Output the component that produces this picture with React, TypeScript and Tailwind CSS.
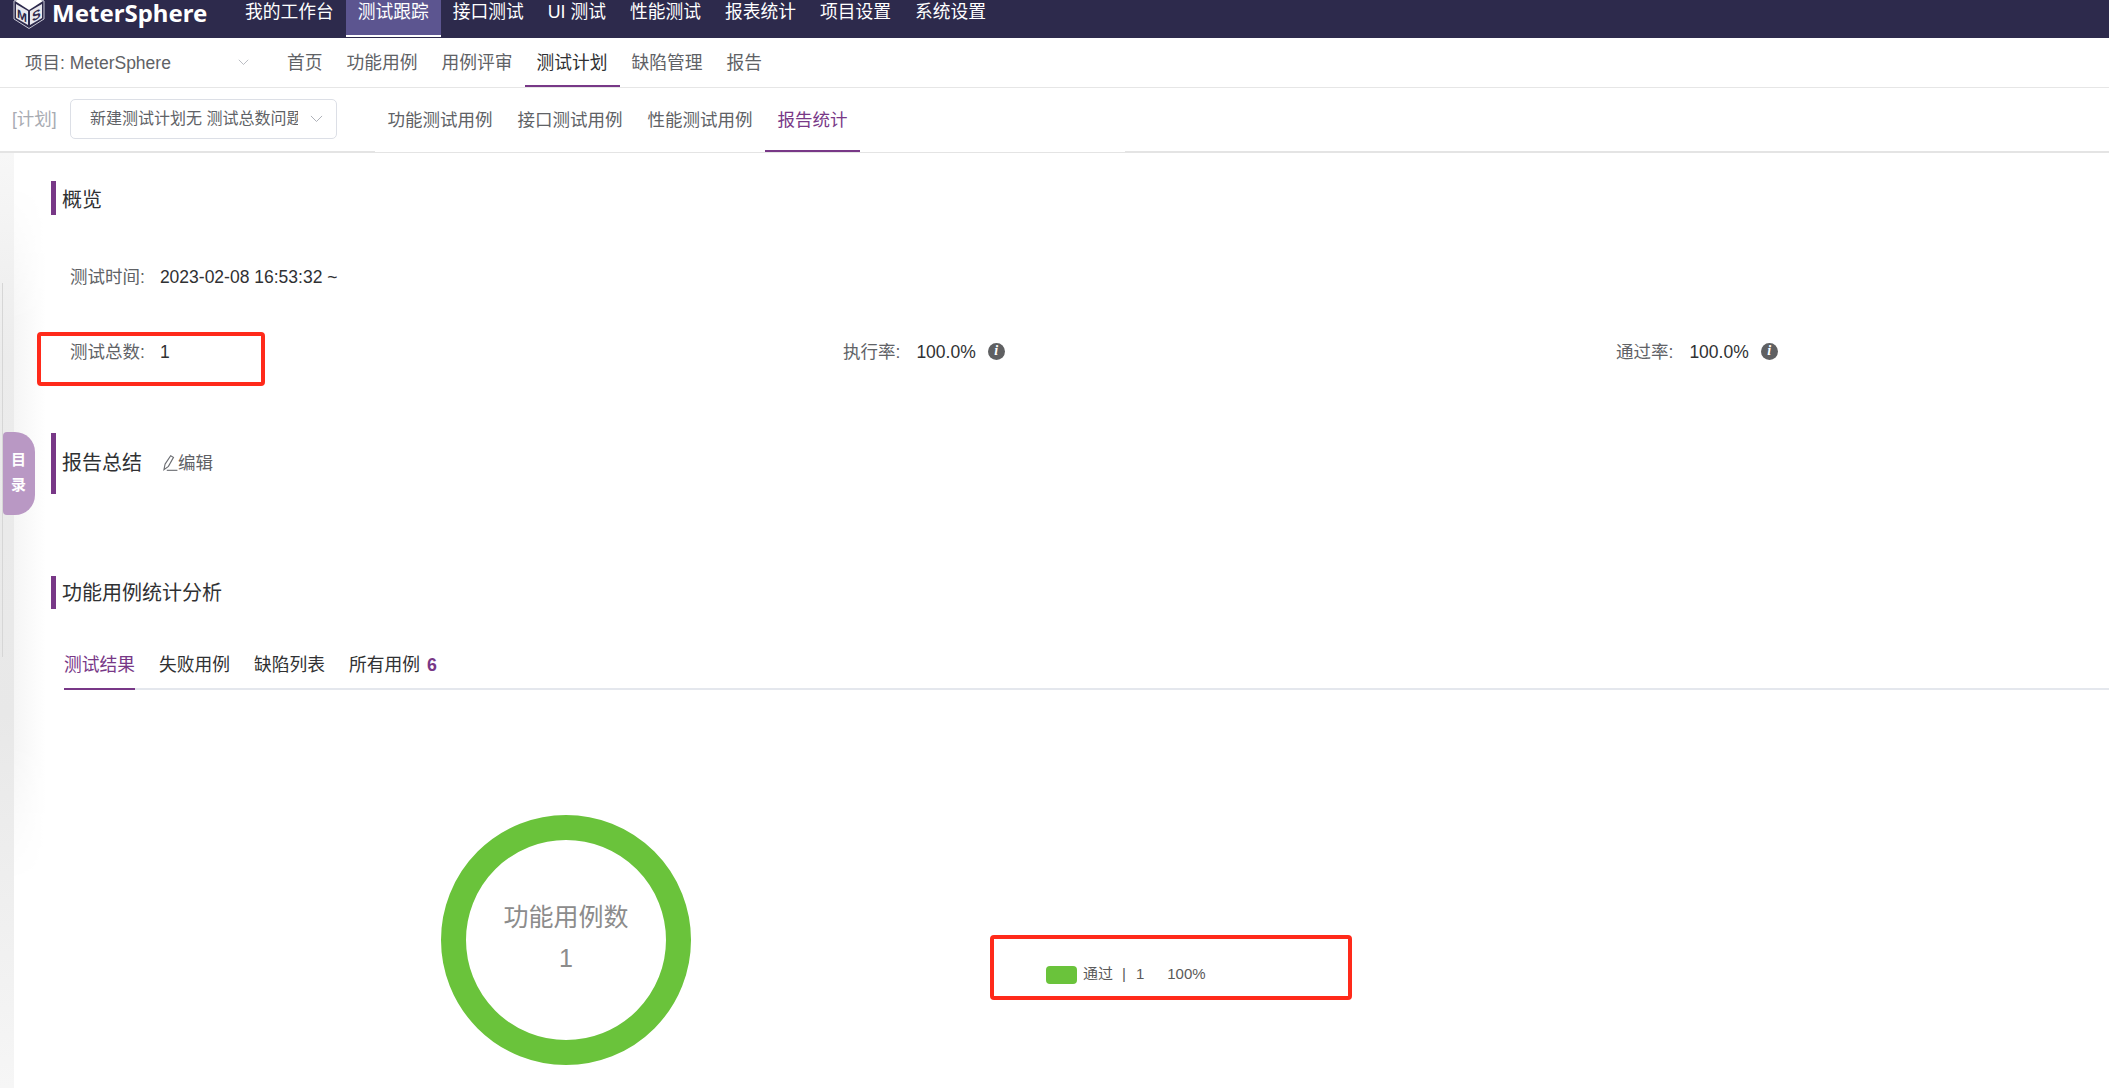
const FONT = 'font-["Liberation_Sans","Noto_Sans_CJK_SC",sans-serif]'

const mainNav = ['我的工作台', '测试跟踪', '接口测试', 'UI 测试', '性能测试', '报表统计', '项目设置', '系统设置']
const subNav = ['首页', '功能用例', '用例评审', '测试计划', '缺陷管理', '报告']
const planTabs = ['功能测试用例', '接口测试用例', '性能测试用例', '报告统计']
const resultTabs = ['测试结果', '失败用例', '缺陷列表', '所有用例']

const Logo = () => (
  <svg width="36" height="30" viewBox="0 0 36 30" className="shrink-0">
    <path d="M18 -6 L33 1 V19 L18 28.5 L3 19 V1 Z" fill="#2d2a4c" stroke="#c9c8d6" strokeWidth="1" />
    <path d="M18 -6 L32 1 L18 10 L4 1 Z" fill="#ffffff" />
    <path d="M5 4 L17 11 V25 L5 18 Z" fill="#e8e8ee" />
    <path d="M31 4 L19 11 V25 L31 18 Z" fill="#e8e8ee" />
    <text fontSize="12" fontWeight="700" fill="#2d2a4c" transform="translate(6 17) skewY(30)" fontFamily="Liberation Sans">M</text>
    <text fontSize="13" fontWeight="700" fill="#2d2a4c" transform="translate(21 22) skewY(-30)" fontFamily="Liberation Sans">S</text>
  </svg>
)

const Chevron = ({ className }: { className: string }) => (
  <svg viewBox="0 0 14 8" fill="none" className={className}>
    <path d="M1 1 L7 7 L13 1" stroke="#a8abb2" strokeWidth="1" />
  </svg>
)

const InfoIcon = () => (
  <span className="ml-[12px] flex h-[17px] w-[17px] -translate-y-px items-center justify-center rounded-full bg-[#5f6062] font-['Liberation_Serif',serif] text-[14px] font-bold italic leading-none text-white">
    i
  </span>
)

const EditIcon = () => (
  <svg width="18" height="18" viewBox="0 0 16 16" fill="none" stroke="#6b6d72" strokeWidth="1">
    <path d="M4.5 9 L9.5 1.5 L12 3 L7.5 11 L3.5 14 Z" />
    <path d="M6 14.5 H15.5" />
  </svg>
)

const SectionTitle = ({ className, children }: { className: string; children: React.ReactNode }) => (
  <div className={`ml-[51px] flex items-center border-l-[5px] border-[#783887] pl-[6px] text-[20px] leading-[28px] text-[#303133] ${className}`}>
    {children}
  </div>
)

const Stat = ({ label, value, info, gap }: { label: string; value: string; info?: boolean; gap: string }) => (
  <div className="flex w-[773px] shrink-0 items-center text-[17.5px] leading-[24px]">
    <span className={`${gap} text-[#606266]`}>{label}:</span>
    <span className="text-[#303133]">{value}</span>
    {info && <InfoIcon />}
  </div>
)

const App = () => {
  return (
    <div className={`h-[1088px] w-full overflow-hidden bg-white ${FONT}`}>
      {/* 상단 메뉴 */}
      <div className="flex h-[38px] items-start bg-[#2d2a4c] text-[17.75px] leading-[24px] text-white">
        <div className="flex w-[233px] shrink-0 pl-[11px]">
          <Logo />
          <span className="ml-[5px] whitespace-nowrap font-['Noto_Sans',sans-serif] text-[24px] font-bold leading-[26px]">MeterSphere</span>
        </div>
        {mainNav.map((item) => (
          <div
            key={item}
            className={
              item === '测试跟踪'
                ? 'h-[37px] border-b-2 border-white bg-[#5c5590] px-3'
                : 'h-[37px] px-3'
            }
          >
            {item}
          </div>
        ))}
      </div>

      {/* 프로젝트 메뉴 */}
      <div className="flex h-[50px] border-b border-[#e6e6e6] text-[17.75px] leading-[50px] text-[#606266]">
        <div className="flex w-[275px] shrink-0 items-center justify-between pl-[25px] pr-[26px] text-[17.5px]">
          <span>项目: MeterSphere</span>
          <Chevron className="w-[11px]" />
        </div>
        {subNav.map((item) => (
          <div
            key={item}
            className={
              item === '测试计划'
                ? 'h-[49px] border-b-[2px] border-[#783887] px-3 text-[#303133]'
                : 'h-[49px] px-3'
            }
          >
            {item}
          </div>
        ))}
      </div>

      {/* 계획 선택 */}
      <div className="flex h-[65px] text-[17.5px]">
        <div className="flex w-[375px] shrink-0 border-b-2 border-[#e4e4e4] pl-[12px] pt-[11px]">
          <span className="w-[58px] leading-[40px] text-[#a8abb2]">[计划]</span>
          <div className="flex h-[40px] w-[267px] items-center rounded-[5px] border border-[#dcdfe6] pl-[19px]">
            <span className="w-[208px] overflow-hidden whitespace-nowrap text-[16px] text-[#606266]">新建测试计划无 测试总数问题</span>
            <Chevron className="ml-[12px] w-[13px]" />
          </div>
        </div>
        <div className="flex w-[750px] shrink-0 border-b border-[#e4e4e4] leading-[64px] text-[#606266]">
          {planTabs.map((item) => (
            <div
              key={item}
              className={
                item === '报告统计'
                  ? 'h-[64px] border-b-2 border-[#783887] px-[12.5px] text-[#783887]'
                  : 'h-[64px] px-[12.5px]'
              }
            >
              {item}
            </div>
          ))}
        </div>
        <div className="flex-1 border-b-2 border-[#e4e4e4]" />
      </div>

      {/* 보고서 본문 */}
      <div className="relative h-[935px]">
        <div className="absolute bottom-0 left-0 top-0 w-[14px] bg-[linear-gradient(to_bottom,#f7f7f7,#ececec_22%,#e8e8e8_60%,#f6f6f6)]" />
        <div className="absolute left-[14px] top-[30px] h-[700px] w-[32px] bg-[linear-gradient(to_right,#f5f5f5,#ffffff)] [mask-image:linear-gradient(to_bottom,transparent,black_20%,black_80%,transparent)]" />
        <div className="absolute left-[2px] top-[130px] h-[374px] w-px bg-[#d6d6d6]" />

        <div className="absolute left-[3px] top-[279px] flex h-[83px] w-[32px] flex-col items-center justify-center gap-[10px] rounded-l-[4px] rounded-r-[20px] bg-[#b998c4] pb-[3px] pr-[1px] text-[15px] font-bold leading-[15px] text-white">
          <span>目</span>
          <span>录</span>
        </div>

        <div className="relative">
          <SectionTitle className="h-[34px] translate-y-[28px] pt-[3px]">概览</SectionTitle>

          <div className="ml-[70px] mt-[78px]">
            <Stat label="测试时间" value="2023-02-08 16:53:32 ~" gap="mr-[15px]" />
          </div>
          <div className="ml-[70px] mt-[51px] flex">
            <Stat label="测试总数" value="1" gap="mr-[15px]" />
            <Stat label="执行率" value="100.0%" info gap="mr-[16px]" />
            <Stat label="通过率" value="100.0%" info gap="mr-[16px]" />
          </div>

          <SectionTitle className="mt-[69px] h-[61px] pb-[2px]">
            <span>报告总结</span>
            <span className="ml-[18px] flex items-center text-[17.5px] text-[#606266]">
              <EditIcon />
              编辑
            </span>
          </SectionTitle>

          <SectionTitle className="mt-[82px] h-[33px] pt-[1px]">功能用例统计分析</SectionTitle>

          <div className="ml-[64px] mt-[31px] flex h-[50px] gap-[24px] border-b-2 border-[#e4e7ed] text-[17.75px] leading-[50px] text-[#303133]">
            {resultTabs.map((item) => (
              <div
                key={item}
                className={item === '测试结果' ? 'h-[50px] border-b-2 border-[#783887] text-[#783887]' : 'h-[50px]'}
              >
                {item}
                {item === '所有用例' && <span className="ml-[7px] font-bold text-[#783887]">6</span>}
              </div>
            ))}
          </div>

          <div className="ml-[441px] mt-[125px] flex items-start">
            <div className="flex h-[250px] w-[250px] shrink-0 flex-col items-center justify-center rounded-full border-[25px] border-[#6ac33b] text-[25px] leading-[41px] text-[#8c8c8c]">
              <span>功能用例数</span>
              <span className="mb-[4px]">1</span>
            </div>
            <div className="ml-[355px] mt-[151px] flex items-center text-[15px] leading-[18px] text-[#5a5a5a]">
              <span className="h-[18px] w-[31px] rounded-[4px] bg-[#6ac33b]" />
              <span className="ml-[6px] -translate-y-px">通过</span>
              <span className="ml-[9px] -translate-y-px">|</span>
              <span className="ml-[10px] -translate-y-px">1</span>
              <span className="ml-[23px] -translate-y-px">100%</span>
            </div>
          </div>
        </div>

        {/* 빨간 표시 */}
        <div className="absolute left-[37px] top-[179px] h-[54px] w-[228px] rounded-[4px] border-[4px] border-[#ff2a1a]" />
        <div className="absolute left-[990px] top-[782px] h-[65px] w-[362px] rounded-[4px] border-[4px] border-[#ff2a1a]" />
      </div>
    </div>
  )
}

export default App
